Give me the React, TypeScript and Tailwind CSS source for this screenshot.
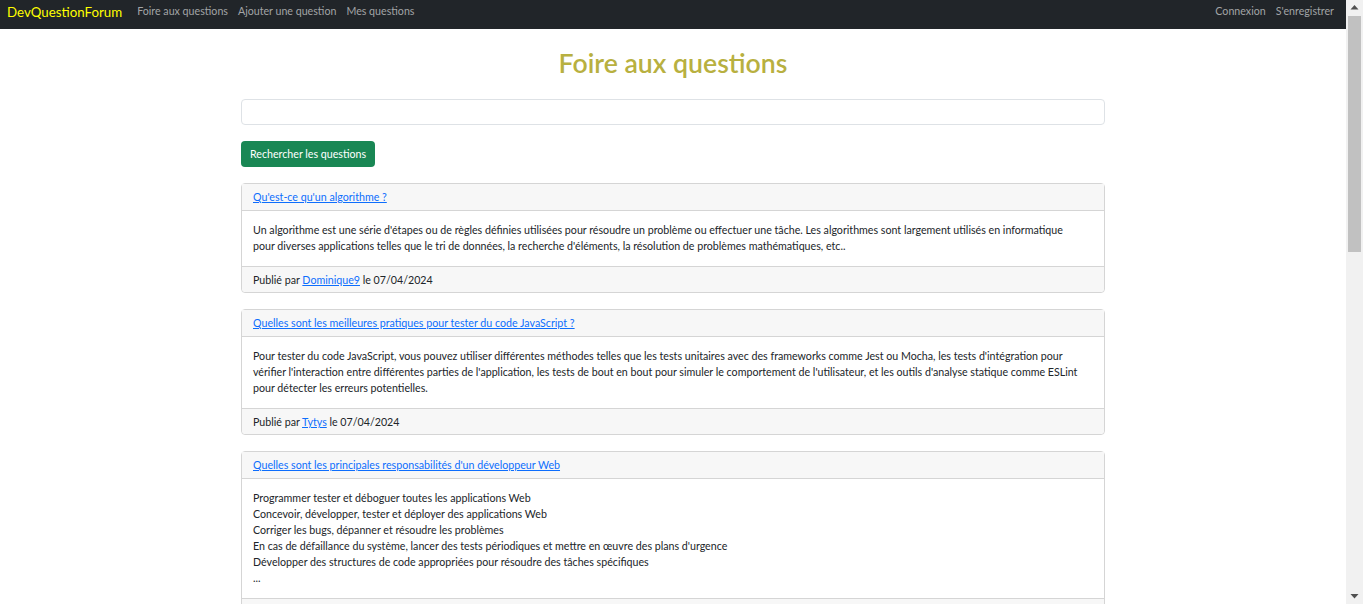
import React from 'react';

interface Question {
  id: number;
  title: string;
  lines: string[];
  author: string;
  date: string;
}

const questions: Question[] = [
  {
    id: 1,
    title: "Qu'est-ce qu'un algorithme ?",
    lines: [
      "Un algorithme est une série d'étapes ou de règles définies utilisées pour résoudre un problème ou effectuer une tâche. Les algorithmes sont largement utilisés en informatique",
      "pour diverses applications telles que le tri de données, la recherche d'éléments, la résolution de problèmes mathématiques, etc..",
    ],
    author: 'Dominique9',
    date: '07/04/2024',
  },
  {
    id: 2,
    title: 'Quelles sont les meilleures pratiques pour tester du code JavaScript ?',
    lines: [
      "Pour tester du code JavaScript, vous pouvez utiliser différentes méthodes telles que les tests unitaires avec des frameworks comme Jest ou Mocha, les tests d'intégration pour",
      "vérifier l'interaction entre différentes parties de l'application, les tests de bout en bout pour simuler le comportement de l'utilisateur, et les outils d'analyse statique comme ESLint",
      'pour détecter les erreurs potentielles.',
    ],
    author: 'Tytys',
    date: '07/04/2024',
  },
  {
    id: 3,
    title: "Quelles sont les principales responsabilités d'un développeur Web",
    lines: [
      'Programmer tester et déboguer toutes les applications Web',
      'Concevoir, développer, tester et déployer des applications Web',
      'Corriger les bugs, dépanner et résoudre les problèmes',
      "En cas de défaillance du système, lancer des tests périodiques et mettre en œuvre des plans d'urgence",
      'Développer des structures de code appropriées pour résoudre des tâches spécifiques',
      '...',
    ],
    author: 'Dominique9',
    date: '07/04/2024',
  },
];

const QuestionCard: React.FC<{ q: Question }> = ({ q }) => (
  <article className="mb-[16px] rounded-[4px] border border-[#d5d5d5]">
    <div className="h-[27px] border-b border-[#d5d5d5] bg-[#f7f7f7] px-[11px] pt-[5px] leading-[16px]">
      <a href="#" className="text-[#0d6efd] underline">
        {q.title}
      </a>
    </div>
    <div className="px-[11px] pt-[11px] pb-[12px] leading-[16px]">
      {q.lines.map((line, i) => (
        <div key={i} className="whitespace-nowrap">
          {line}
        </div>
      ))}
    </div>
    <div className="h-[26px] rounded-b-[4px] border-t border-[#d5d5d5] bg-[#f7f7f7] px-[11px] pt-[5px] leading-[16px]">
      Publié par{' '}
      <a href="#" className="text-[#0d6efd] underline">
        {q.author}
      </a>{' '}
      le {q.date}
    </div>
  </article>
);

// the browser's scrollbar, as seen in the screenshot
const Scrollbar = () => (
  <aside className="sticky top-0 flex h-screen w-[17px] shrink-0 flex-col items-center bg-[#f1f1f1]">
    <svg width="9" height="16" viewBox="0 0 9 16" className="shrink-0">
      <path d="M0.5 9.5 L4.5 5 L8.5 9.5 Z" fill="#505050" />
    </svg>
    <div className="h-[236px] w-[13px] bg-[#c1c1c1]" />
    <div className="flex-1" />
    <svg width="9" height="16" viewBox="0 0 9 16" className="shrink-0">
      <path d="M0.5 6 L4.5 10.5 L8.5 6 Z" fill="#505050" />
    </svg>
  </aside>
);

export default function App() {
  return (
    <div className="flex items-start bg-white font-['Lato','Liberation_Sans',sans-serif] text-[10.67px] text-[#212529]">
      <div className="min-w-0 flex-1">
        {/* Navbar */}
        <nav className="flex h-[29px] items-start justify-between bg-[#212529] px-[7px]">
          <div className="flex items-start">
            <a href="#" className="mr-[10px] pt-[4px] text-[13.3px] leading-[16px] text-[#ffff00]">
              DevQuestionForum
            </a>
            <div className="flex pt-[4px] leading-[14px] text-[#a2a4a6]">
              <a href="#" className="px-[5px]">Foire aux questions</a>
              <a href="#" className="px-[5px]">Ajouter une question</a>
              <a href="#" className="px-[5px]">Mes questions</a>
            </div>
          </div>
          <div className="flex pt-[4px] leading-[14px] text-[#a2a4a6]">
            <a href="#" className="px-[5px]">Connexion</a>
            <a href="#" className="px-[5px]">S'enregistrer</a>
          </div>
        </nav>

        {/* Content */}
        <main className="mx-auto w-[864px] pt-[18px]">
          <h1 className="text-center text-[26.67px] font-semibold leading-[32px] text-[#b8b040]">
            Foire aux questions
          </h1>

          <input
            type="text"
            className="mt-[20px] block h-[26px] w-full rounded-[4px] border border-[#dee2e6] px-[8px] outline-none"
          />

          <button className="mt-[16px] mb-[16px] h-[26px] rounded-[4px] bg-[#198754] px-[9px] text-white">
            Rechercher les questions
          </button>

          {questions.map((q) => (
            <QuestionCard key={q.id} q={q} />
          ))}
        </main>
      </div>
      <Scrollbar />
    </div>
  );
}
